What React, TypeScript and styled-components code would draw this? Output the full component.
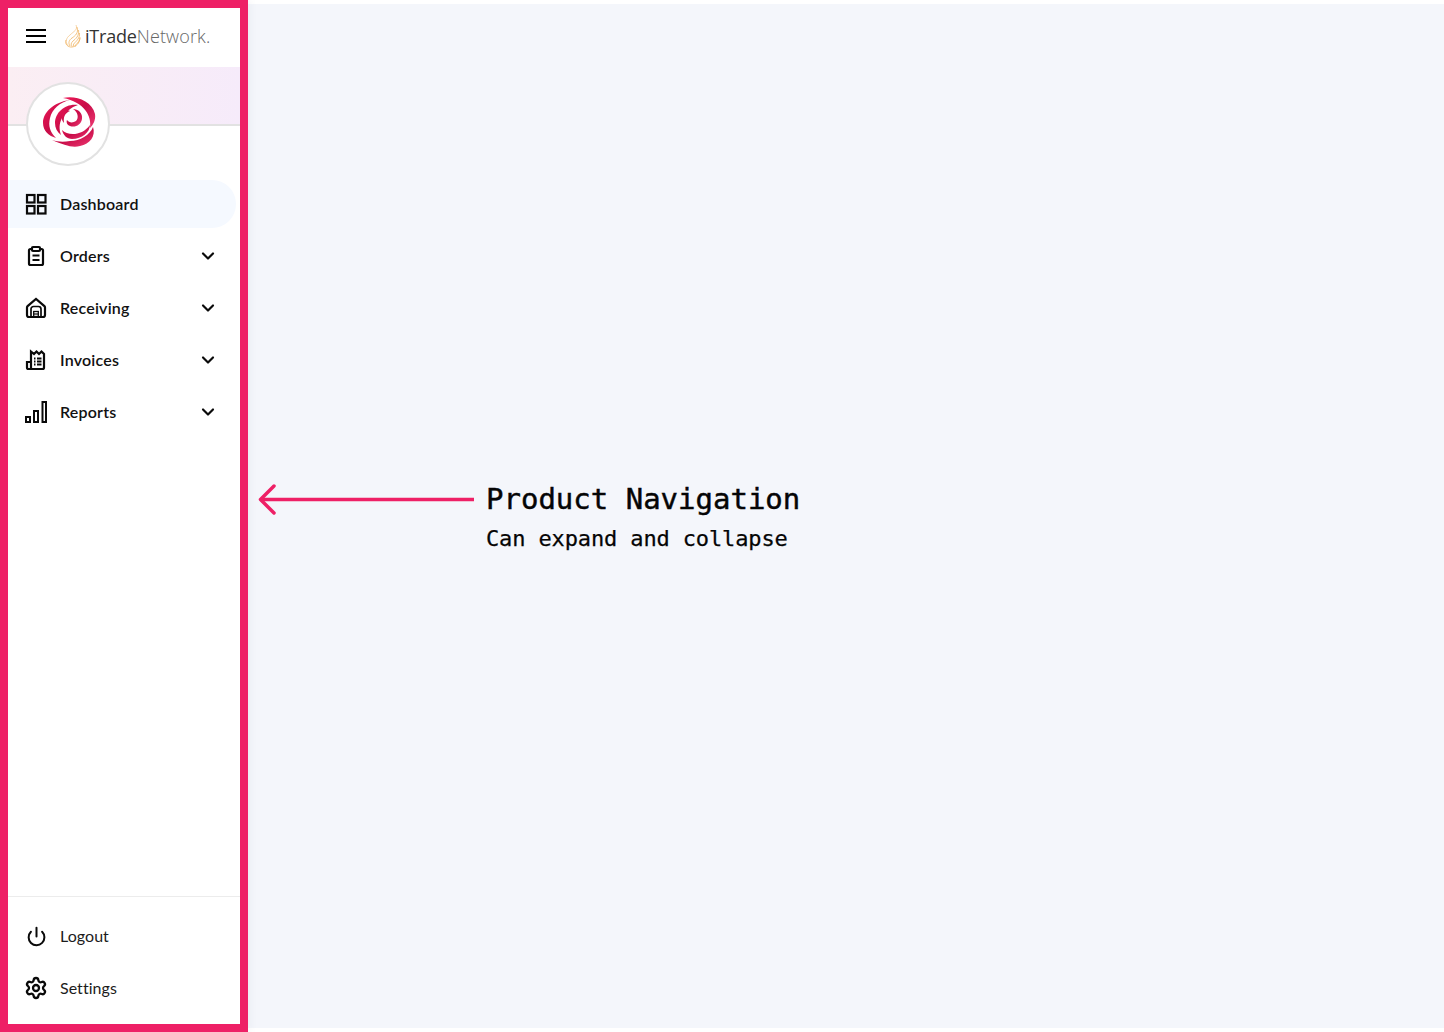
import React from "react";
import styled, { createGlobalStyle } from "styled-components";
import { ChevronDown, Power, Settings } from "lucide-react";

const Global = createGlobalStyle`
  html, body { margin: 0; padding: 0; background: #fff; }
  body { font-family: "Lato", "Liberation Sans", sans-serif; color: #0d0d0d; }
`;

const Shell = styled.div`
  display: flex;
  width: 1444px;
  height: 1032px;
  overflow: hidden;
`;

const Sidebar = styled.aside`
  position: relative;
  z-index: 1;
  box-sizing: border-box;
  flex: 0 0 248px;
  height: 1032px;
  border: 8px solid #ee2066;
  background: #fff;
  display: flex;
  flex-direction: column;
  box-shadow: 0 0 10px rgba(40, 50, 90, 0.07);
`;

const TopBar = styled.div`
  box-sizing: border-box;
  flex: 0 0 59px;
  display: flex;
  align-items: center;
  gap: 18px;
  padding: 0 0 3px 18px;
`;

const Burger = styled.span`
  display: block;
  width: 20px;
  height: 14px;
  border-top: 2px solid #000;
  border-bottom: 2px solid #000;
  box-sizing: border-box;
  position: relative;
  &::after {
    content: "";
    position: absolute;
    left: 0;
    right: 0;
    top: 4px;
    height: 2px;
    background: #000;
  }
`;

const Brand = styled.div`
  display: flex;
  align-items: center;
  gap: 3px;
`;

const BrandName = styled.span`
  font-family: "Open Sans", "Liberation Sans", sans-serif;
  font-size: 18px;
  font-weight: 400;
  letter-spacing: -0.2px;
  color: #333;
`;

const BrandLight = styled.span`
  font-weight: 300;
  color: #666;
  letter-spacing: 0.15px;
`;

const Banner = styled.div`
  position: relative;
  box-sizing: border-box;
  flex: 0 0 59px;
  background: linear-gradient(90deg, #fbeef3 0%, #f6ebfa 100%);
  border-bottom: 2px solid #e2e2e2;
`;

const Avatar = styled.div`
  position: absolute;
  left: 18px;
  top: 15px;
  box-sizing: border-box;
  width: 84px;
  height: 84px;
  border-radius: 50%;
  background: #fff;
  border: 2px solid #e2e2e2;
  display: flex;
  align-items: center;
  justify-content: center;
`;

const Nav = styled.nav`
  margin-top: 54px;
  display: flex;
  flex-direction: column;
  gap: 4px;
  flex: 1;
`;

const Row = styled.a<{ $active?: boolean }>`
  box-sizing: border-box;
  width: 228px;
  height: 48px;
  display: flex;
  align-items: center;
  gap: 12px;
  padding: 0 16px;
  border-radius: 0 24px 24px 0;
  background: ${(p) => (p.$active ? "#f5f9ff" : "transparent")};
  color: #0d0d0d;
`;

const Label = styled.span<{ $regular?: boolean }>`
  flex: 1;
  font-size: 16px;
  line-height: 24px;
  font-weight: ${(p) => (p.$regular ? 400 : 600)};
  letter-spacing: ${(p) => (p.$regular ? "0.05px" : "0.2px")};
  color: ${(p) => (p.$regular ? "#1c1c1c" : "#111")};
`;

const Chevron = styled(ChevronDown)`
  margin-right: 2px;
  flex: none;
`;

const IconSlot = styled.span`
  flex: 0 0 24px;
  height: 24px;
  display: flex;
  align-items: center;
  justify-content: center;
`;

const Footer = styled.div`
  border-top: 1px solid #ececec;
  padding: 15px 0 12px;
  display: flex;
  flex-direction: column;
  gap: 4px;
`;

const Main = styled.div`
  flex: 1;
  padding: 4px 0;
  display: flex;
`;

const Canvas = styled.main`
  flex: 1;
  background: #f4f6fb;
  display: flex;
  align-items: flex-start;
  padding: 476px 0 0 10px;
`;

const Note = styled.div`
  display: flex;
  align-items: flex-start;
  gap: 11px;
`;

const NoteArrow = styled.svg`
  display: block;
  margin-top: 3px;
  flex: none;
`;

const NoteText = styled.div`
  font-family: "DejaVu Sans Mono", "Liberation Mono", monospace;
  color: #050505;
`;

const NoteTitle = styled.div`
  font-size: 29px;
  line-height: 38px;
  font-weight: 400;
  -webkit-text-stroke: 0.45px #050505;
`;

const NoteSub = styled.div`
  font-size: 22px;
  line-height: 30px;
  margin-top: 6px;
  letter-spacing: -0.13px;
  -webkit-text-stroke: 0.25px #050505;
`;

const ic = { width: 24, height: 24, viewBox: "0 0 24 24", fill: "none", stroke: "#0a0a0a", strokeWidth: 2.2 } as const;

const DashIcon = () => (
  <svg {...ic}>
    <rect x="3" y="3" width="7.5" height="7.5" />
    <rect x="14" y="3" width="7.5" height="7.5" />
    <rect x="3" y="14" width="7.5" height="7.5" />
    <rect x="14" y="14" width="7.5" height="7.5" />
  </svg>
);

const OrdersIcon = () => (
  <svg {...ic}>
    <path d="M8 5H6.500A1.500 1.500 0 0 0 5 6.500v13A1.500 1.500 0 0 0 6.500 21h11a1.500 1.500 0 0 0 1.500-1.500v-13A1.500 1.500 0 0 0 17.500 5H16" />
    <rect x="8" y="3" width="8" height="4" rx="1" />
    <path d="M8.500 11.500h7M8.500 16h7" />
  </svg>
);

const ReceivingIcon = () => (
  <svg {...ic}>
    <path d="M5 21h14a2 2 0 0 0 2-2v-7.500a2 2 0 0 0-.6-1.400L12 3 3.600 10.100A2 2 0 0 0 3 11.500V19a2 2 0 0 0 2 2z" />
    <path d="M7 21v-8a2.500 2.500 0 0 1 2.500-2.500h5A2.500 2.500 0 0 1 17 13v8" strokeWidth="1.700" />
    <rect x="9.700" y="15.500" width="4.600" height="5" strokeWidth="1.300" />
    <path d="M9.700 18h4.600" strokeWidth="1.200" />
  </svg>
);

const InvoiceIcon = () => (
  <svg {...ic}>
    <path d="M7 21V3.500l3 2.500 2.500-2.500 2.500 2.500 2.500-2.500 2.500 2.500V19.500a1.500 1.500 0 0 1-1.500 1.500H4.500A1.500 1.500 0 0 1 3 19.500V14h4" />
    <path d="M10 10.500h1.500M13 10.500h4.500M10 13.500h1.500M13 13.500h4.500M10 16.500h1.500M13 16.500h4.500" strokeWidth="1.800" />
  </svg>
);

const ReportsIcon = () => (
  <svg {...ic} strokeWidth="2">
    <rect x="2" y="17" width="4" height="5" />
    <rect x="10" y="11" width="4" height="11" />
    <rect x="18.500" y="2" width="3.500" height="20" />
  </svg>
);

const Flame = () => (
  <svg width="18" height="24" viewBox="0 0 18 24" fill="none" stroke="#f0b462" strokeWidth="0.800">
    <path d="M12 1C14 6 10 7 6 11 2 14 1 18 4 21.500" opacity=".7" />
    <path d="M13 3c2 6-2 9-5 11-3 2-4 5-2 8" />
    <path d="M14.500 6c1 6-3 9-5.500 11-2 2-2.500 4-1 5.500" />
    <path d="M15.500 9c.5 5-3 8-5 10-1.500 1.500-1.500 3-.5 3.500" />
    <path d="M16 13c0 4-2.500 6-4 7.500-1 1-1 2-.5 2" />
    <path d="M2 16c-1.500 4 2 7.500 6 7 4-.5 7.500-3.500 8-9" />
  </svg>
);

const Rose = () => (
  <svg width="60" height="60" viewBox="-2 2 60 60">
    <defs>
      <linearGradient id="rg" x1="0" y1="0" x2="1" y2="1">
        <stop offset="0" stopColor="#ee1a58" />
        <stop offset="0.5" stopColor="#c80c48" />
        <stop offset="1" stopColor="#ee3a74" />
      </linearGradient>
    </defs>
    <g fill="url(#rg)">
      <path d="M23 6C34 3 52 8 55 22C56 28 53 33 50 36C52 24 44 10 23 6Z" />
      <path d="M30 8C14 10 3 20 3 31C3 39 9 44 16 46C10 40 8 34 10 26C12 17 20 10 30 8Z" />
      <path d="M12 48C24 53 32 56 40 54C50 52 56 44 53 35C50 43 40 49 30 49C24 50 18 50 12 48Z" />
      <path d="M38 13C26 11 15 20 15 31C15 36 17 40 21 43C19 37 19 32 22 26C26 20 31 15 38 13Z" />
      <path d="M22 38C28 44 42 44 50 33C50 40 42 47 32 47C27 47 23 43 22 38Z" />
      <path d="M33 17C38 17 43 21 42 27C41 33 35 36 30 34C27 33 26 30 27 28C29 31 33 31 36 29C39 26 38 20 33 17Z" />
      <path d="M30 19C25 21 23 25 24 31C21 28 21 23 24 20C26 18 28 18 30 19Z" />
    </g>
  </svg>
);

const items = [
  { label: "Dashboard", icon: <DashIcon />, active: true },
  { label: "Orders", icon: <OrdersIcon />, more: true },
  { label: "Receiving", icon: <ReceivingIcon />, more: true },
  { label: "Invoices", icon: <InvoiceIcon />, more: true },
  { label: "Reports", icon: <ReportsIcon />, more: true },
];

export default function App() {
  return (
    <Shell>
      <Global />
      <Sidebar>
        <TopBar>
          <Burger />
          <Brand>
            <Flame />
            <BrandName>
              iTrade<BrandLight>Network.</BrandLight>
            </BrandName>
          </Brand>
        </TopBar>
        <Banner>
          <Avatar>
            <Rose />
          </Avatar>
        </Banner>
        <Nav>
          {items.map((it) => (
            <Row key={it.label} $active={it.active}>
              {it.icon}
              <Label>{it.label}</Label>
              {it.more && <Chevron size={20} strokeWidth={2.6} color="#0a0a0a" />}
            </Row>
          ))}
        </Nav>
        <Footer>
          <Row>
            <IconSlot>
              <Power size={21} strokeWidth={2.3} color="#0a0a0a" />
            </IconSlot>
            <Label $regular>Logout</Label>
          </Row>
          <Row>
            <IconSlot>
              <Settings size={24} strokeWidth={2.3} color="#0a0a0a" />
            </IconSlot>
            <Label $regular>Settings</Label>
          </Row>
        </Footer>
      </Sidebar>
      <Main>
        <Canvas>
          <Note>
            <NoteArrow width="217" height="32" viewBox="0 0 217 32" fill="none" stroke="#ee2066" strokeWidth="3.500">
              <path d="M216 16.500H3" />
              <path d="M16 3L2.500 16.500 16 30" strokeLinecap="round" strokeLinejoin="round" />
            </NoteArrow>
            <NoteText>
              <NoteTitle>Product Navigation</NoteTitle>
              <NoteSub>Can expand and collapse</NoteSub>
            </NoteText>
          </Note>
        </Canvas>
      </Main>
    </Shell>
  );
}
